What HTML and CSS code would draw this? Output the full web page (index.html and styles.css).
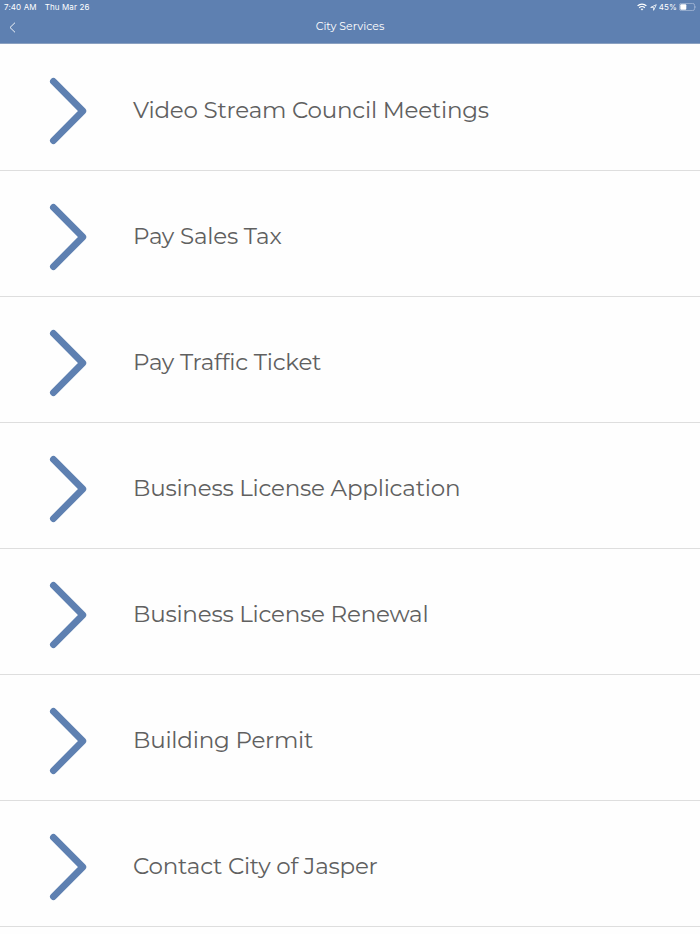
FILE: index.html
```html
<!DOCTYPE html>
<html lang="en">
<head>
<meta charset="utf-8">
<title>City Services</title>
<link rel="stylesheet" href="styles.css">
</head>
<body>
<header class="header">
  <div class="status">
    <div class="status-left"><span class="time">7:40 AM</span><span class="date">Thu Mar 26</span></div>
    <div class="status-right">
      <svg class="wifi" width="10" height="8" viewBox="0 0 10 8" fill="none" stroke="#fff" stroke-width="1.3"><path d="M.6 2.9a6.2 6.2 0 0 1 8.8 0M2.2 4.7a4 4 0 0 1 5.6 0"/><path d="M5 7.6 3.6 6.1a2 2 0 0 1 2.8 0z" fill="#fff" stroke="none"/></svg>
      <svg class="loc" width="7" height="7" viewBox="0 0 7 7" fill="none" stroke="#fff" stroke-width=".8" stroke-linejoin="round"><path d="M.7 3.4 6.3.7 3.6 6.3V3.4z"/></svg>
      <span class="percent">45%</span>
      <svg class="battery" width="18" height="8" viewBox="0 0 18 8"><rect x=".4" y=".4" width="15.2" height="7.2" rx="2" fill="none" stroke="#b3c3dc" stroke-width=".7"/><rect x="1.3" y="1.3" width="6" height="5.4" rx="1" fill="#fff"/><path d="M16.5 2.7q1.2 1.3 0 2.6z" fill="#b3c3dc"/></svg>
    </div>
  </div>
  <nav class="nav">
    <svg class="back" width="7" height="11" viewBox="0 0 7 11" fill="none" stroke="#fff" stroke-width=".9"><path d="M6 .7 1 5.5l5 4.8"/></svg>
    <h1 class="title">City Services</h1>
  </nav>
</header>
<main class="list">
  <div class="row"><svg class="chevron" viewBox="0 0 38 68"><path d="M4.4 4.4 33.8 34 4.4 63.6"/></svg><span class="label">Video Stream Council Meetings</span></div>
  <div class="row"><svg class="chevron" viewBox="0 0 38 68"><path d="M4.4 4.4 33.8 34 4.4 63.6"/></svg><span class="label">Pay Sales Tax</span></div>
  <div class="row"><svg class="chevron" viewBox="0 0 38 68"><path d="M4.4 4.4 33.8 34 4.4 63.6"/></svg><span class="label">Pay Traffic Ticket</span></div>
  <div class="row"><svg class="chevron" viewBox="0 0 38 68"><path d="M4.4 4.4 33.8 34 4.4 63.6"/></svg><span class="label">Business License Application</span></div>
  <div class="row"><svg class="chevron" viewBox="0 0 38 68"><path d="M4.4 4.4 33.8 34 4.4 63.6"/></svg><span class="label">Business License Renewal</span></div>
  <div class="row"><svg class="chevron" viewBox="0 0 38 68"><path d="M4.4 4.4 33.8 34 4.4 63.6"/></svg><span class="label">Building Permit</span></div>
  <div class="row"><svg class="chevron" viewBox="0 0 38 68"><path d="M4.4 4.4 33.8 34 4.4 63.6"/></svg><span class="label">Contact City of Jasper</span></div>
</main>
</body>
</html>
```
FILE: styles.css
```css
* { box-sizing: border-box; }
body { margin: 0; height: 934px; overflow: hidden; background: #fefefe; color: #606060; font-family: Montserrat, Inter, sans-serif; }
.header { height: 44px; background: #5e80b1; color: #fff; border-bottom: 1px solid #8ba1c1; }
.status { display: flex; justify-content: space-between; height: 14px; padding: 0 3px 0 4px; font: 8px/14px Inter, sans-serif; letter-spacing: .12px; }
.status-left { display: flex; gap: 8px; }
.status-right { display: flex; align-items: center; gap: 2px; }
.loc { margin-left: 1px; }
.nav { display: grid; grid-template-columns: 20px 1fr 20px; align-items: center; height: 26px; padding: 0 8px; }
.back { margin-left: .5px; }
.title { margin: -2px 0 0; font-size: 11px; font-weight: 400; text-align: center; }
.row { display: flex; align-items: center; height: 126px; padding-left: 49px; box-shadow: 0 1px 0 #dedede; }
.chevron { width: 38px; height: 68px; margin: 8px 46px 0 0; fill: none; stroke: #5e80b1; stroke-width: 6.8; stroke-linecap: round; stroke-linejoin: round; }
.label { margin-top: 6px; font-size: 23px; line-height: 30px; letter-spacing: -.21px; white-space: nowrap; }
```
